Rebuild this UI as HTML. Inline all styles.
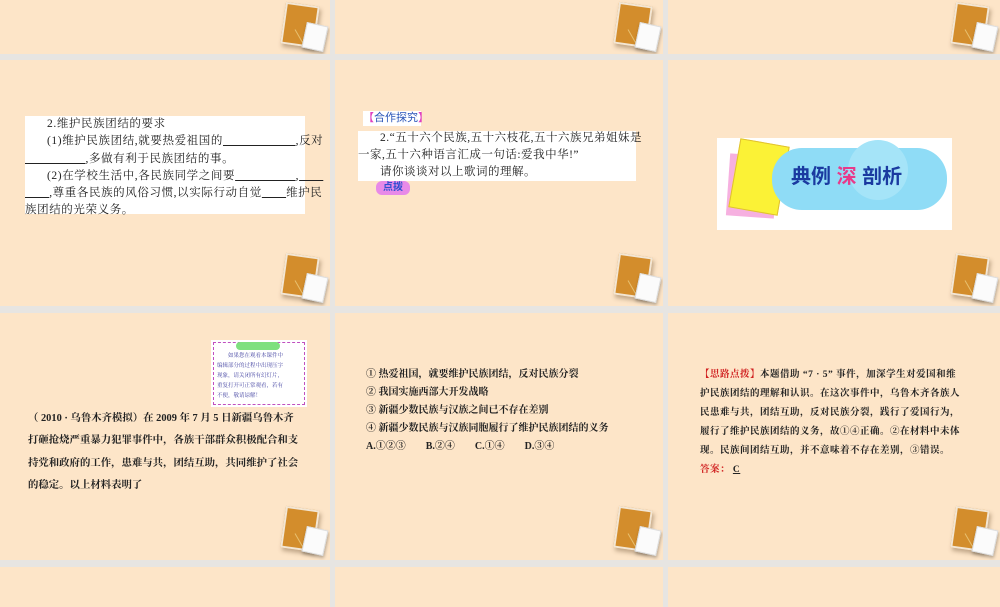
<!DOCTYPE html>
<html><head><meta charset="utf-8"><style>
*{margin:0;padding:0;box-sizing:border-box}
body{width:1000px;height:600px;background:#e7e5e2;position:relative;overflow:hidden;font-family:"Liberation Serif","Noto Serif CJK SC",serif;color:#222}
.s{position:absolute;background:#fde5c8;overflow:hidden}
.bk{position:absolute;width:50px;height:52px}
.bk .o{position:absolute;left:3px;top:2px;width:34px;height:42px;background:#d38d2c;border:2px solid #f3e6d4;transform:rotate(8deg);box-shadow:2px 3px 4px rgba(120,90,60,.45)}
.bk .p{position:absolute;left:24px;top:22px;width:22px;height:26px;background:#fbfbfb;border:1px solid #ddd;transform:rotate(12deg);box-shadow:1px 2px 3px rgba(0,0,0,.3)}
.bk .l{position:absolute;left:20px;top:26px;width:1px;height:22px;background:#e8c070;transform:rotate(-30deg)}
.t{position:absolute;white-space:nowrap}
.w{position:absolute;background:#fff}
</style></head><body>
<!-- row1 -->
<div class="s" style="left:0;top:0;width:330px;height:54px"><div class="bk" style="left:280px;top:2px"><div class="o"></div><div class="l"></div><div class="p"></div></div></div>
<div class="s" style="left:335px;top:0;width:328px;height:54px"><div class="bk" style="left:278px;top:2px"><div class="o"></div><div class="l"></div><div class="p"></div></div></div>
<div class="s" style="left:668px;top:0;width:332px;height:54px"><div class="bk" style="left:282px;top:2px"><div class="o"></div><div class="l"></div><div class="p"></div></div></div>
<!-- row2 -->
<div class="s" style="left:0;top:60px;width:330px;height:246px">
 <div class="w" style="left:25px;top:56px;width:280px;height:98px"></div>
 <div class="t" style="left:25px;top:56px;font-size:11.5px;line-height:17.3px;letter-spacing:0.6px">
 <div style="padding-left:22px">2.维护民族团结的要求</div>
 <div style="padding-left:22px">(1)维护民族团结,就要热爱祖国的<u>　　　　　　</u>,反对</div>
 <div><u>　　　　　</u>,多做有利于民族团结的事。</div>
 <div style="padding-left:22px">(2)在学校生活中,各民族同学之间要<u>　　　　　</u>,<u>　　</u></div>
 <div><u>　　</u>,尊重各民族的风俗习惯,以实际行动自觉<u>　　</u>维护民</div>
 <div>族团结的光荣义务。</div></div>
 <div class="bk" style="left:280px;top:193px"><div class="o"></div><div class="l"></div><div class="p"></div></div>
</div>
<div class="s" style="left:335px;top:60px;width:328px;height:246px">
 <div class="w" style="left:28px;top:51px;width:58px;height:15px"></div>
 <div class="t" style="left:28px;top:50px;font-family:'Liberation Sans','Noto Sans CJK SC',sans-serif;font-size:11px;color:#2a55b8;line-height:16px"><span style="color:#e040c0">【</span>合作探究<span style="color:#e040c0">】</span></div>
 <div class="w" style="left:23px;top:71px;width:278px;height:50px"></div>
 <div class="t" style="left:23px;top:70px;font-size:11.5px;line-height:17px;letter-spacing:0.5px">
 <div style="padding-left:22px">2.“五十六个民族,五十六枝花,五十六族兄弟姐妹是</div>
 <div>一家,五十六种语言汇成一句话:爱我中华!”</div>
 <div style="padding-left:22px">请你谈谈对以上歌词的理解。</div></div>
 <div style="position:absolute;left:41px;top:121px;width:34px;height:14px;background:#e88ae8;border-radius:6px;color:#3050d0;font-size:10px;line-height:14px;text-align:center;font-family:'Liberation Sans','Noto Sans CJK SC',sans-serif;font-weight:bold">点拨</div>
 <div class="bk" style="left:278px;top:193px"><div class="o"></div><div class="l"></div><div class="p"></div></div>
</div>
<div class="s" style="left:668px;top:60px;width:332px;height:246px">
 <div class="w" style="left:49px;top:78px;width:235px;height:92px"></div>
 <div style="position:absolute;left:60px;top:95px;width:48px;height:62px;background:#f6b0e0;transform:rotate(4deg)"></div>
 <div style="position:absolute;left:66px;top:82px;width:50px;height:70px;background:#fbf236;border:1px solid #e0c030;transform:rotate(10deg)"></div>
 <div style="position:absolute;left:104px;top:88px;width:175px;height:62px;background:#8fdcf6;border-radius:30px"></div>
 <div style="position:absolute;left:180px;top:80px;width:60px;height:60px;background:#a5e4f8;border-radius:50%"></div>
 <div class="t" style="left:123px;top:104px;font-family:'Liberation Sans','Noto Sans CJK SC',sans-serif;font-size:20px;font-weight:bold;color:#1a3aa0;line-height:26px">典例 <span style="color:#e83a8a">深</span> 剖析</div>
 <div class="bk" style="left:282px;top:193px"><div class="o"></div><div class="l"></div><div class="p"></div></div>
</div>
<!-- row3 -->
<div class="s" style="left:0;top:313px;width:330px;height:247px">
 <div class="w" style="left:213px;top:29px;width:92px;height:63px;border:1px dashed #c050c0;outline:2px solid #fff"></div>
 <div style="position:absolute;left:236px;top:29px;width:44px;height:8px;background:#7ee07e;border-radius:4px"></div>
 <div class="t" style="left:217px;top:38px;font-size:5.5px;line-height:10px;color:#4040a0">　　如果您在观看本课件中<br>编辑部分的过程中出现压字<br>现象，请关闭所有幻灯片，<br>重复打开可正常观看，若有<br>不便，敬请谅解！</div>
 <div class="t" style="left:28px;top:95px;font-size:10.4px;line-height:22.3px;font-weight:bold">
 <div>（ 2010 · 乌鲁木齐模拟）在 2009 年 7 月 5 日新疆乌鲁木齐</div>
 <div>打砸抢烧严重暴力犯罪事件中，各族干部群众积极配合和支</div>
 <div>持党和政府的工作，患难与共，团结互助，共同维护了社会</div>
 <div>的稳定。以上材料表明了</div></div>
 <div class="bk" style="left:280px;top:193px"><div class="o"></div><div class="l"></div><div class="p"></div></div>
</div>
<div class="s" style="left:335px;top:313px;width:328px;height:247px">
 <div class="t" style="left:31px;top:53px;font-size:10px;line-height:18px;font-weight:bold">
 <div>① 热爱祖国，就要维护民族团结，反对民族分裂</div>
 <div>② 我国实施西部大开发战略</div>
 <div>③ 新疆少数民族与汉族之间已不存在差别</div>
 <div>④ 新疆少数民族与汉族同胞履行了维护民族团结的义务</div>
 <div>A.①②③　　B.②④　　C.①④　　D.③④</div></div>
 <div class="bk" style="left:278px;top:193px"><div class="o"></div><div class="l"></div><div class="p"></div></div>
</div>
<div class="s" style="left:668px;top:313px;width:332px;height:247px">
 <div class="t" style="left:32px;top:53px;font-size:9.5px;line-height:19px;font-weight:bold;letter-spacing:0.5px">
 <div><span style="color:#d02020">【思路点拨】</span>本题借助 “7 · 5” 事件，加深学生对爱国和维</div>
 <div>护民族团结的理解和认识。在这次事件中，乌鲁木齐各族人</div>
 <div>民患难与共，团结互助，反对民族分裂，践行了爱国行为，</div>
 <div>履行了维护民族团结的义务，故①④正确。②在材料中未体</div>
 <div>现。民族间团结互助，并不意味着不存在差别，③错误。</div>
 <div><span style="color:#d02020">答案：</span> <u>C</u></div></div>
 <div class="bk" style="left:282px;top:193px"><div class="o"></div><div class="l"></div><div class="p"></div></div>
</div>
<!-- row4 -->
<div class="s" style="left:0;top:567px;width:330px;height:40px"></div>
<div class="s" style="left:335px;top:567px;width:328px;height:40px"></div>
<div class="s" style="left:668px;top:567px;width:332px;height:40px"></div>
</body></html>
